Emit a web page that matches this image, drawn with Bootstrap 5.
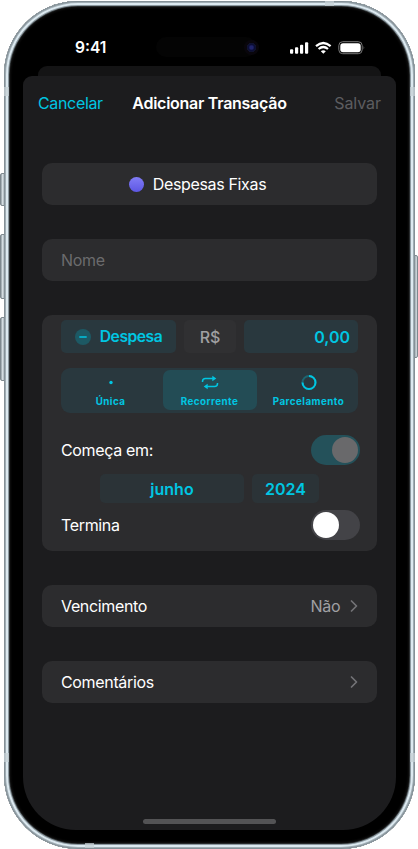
<!DOCTYPE html>
<html lang="pt-BR" data-bs-theme="dark">
<head>
<meta charset="utf-8">
<meta name="viewport" content="width=device-width, initial-scale=1">
<title>Adicionar Transação</title>
<link href="https://cdn.jsdelivr.net/npm/bootstrap@5.3.0/dist/css/bootstrap.min.css" rel="stylesheet">
<style>
html,body{height:849px;overflow:hidden}
body{background:#fff;font-family:Inter,"Liberation Sans",sans-serif;font-size:16px;line-height:20px;color:#fff;width:418px;padding:1px 3px 0 4px}
.phone{width:411px;height:847.5px;border-radius:74px;background:#000;padding:0 19px;
 box-shadow:inset 0 0 0 1px #849097,inset 0 0 0 2px #a0adb4,inset 0 0 0 4px #dce9f0,inset 0 0 0 5px #8b989f,inset 0 0 0 5.8px #303436,inset 0 0 2px 7px #101010}
.key{background:linear-gradient(90deg,#8e9aa1,#e2eaee 60%,#9ba8af);border:1px solid #7d888e;width:5px;border-radius:2px 0 0 2px;left:0;z-index:-1}
.key-r{left:auto;right:0;border-radius:0 2px 2px 0;width:4px}
.band{background:#c5d0d5;opacity:.75}
.status{height:65px;padding:36px 8px 0 52px}
.clock{font-size:15.6px;line-height:21px;font-weight:600;letter-spacing:0}
.island{left:156px;top:36.5px;width:100px;height:20px;border-radius:10px;background:#040404}
.lens{left:244px;top:40px;width:15px;height:15px;border-radius:50%;background:radial-gradient(circle,#20246b 0 1.5px,#0b0d36 3px,#10132c 4.5px,#09060c 5px)}
.behind{height:10px;margin:0 15px;background:#141415;border-radius:9px 9px 0 0}
.sheet{height:754px;background:#1c1c1e;border-radius:9px 9px 53px 53px;padding:0 19px}
.head{height:54px;margin:0 -4px}
.head>:first-child,.head>:last-child{flex:1 1 0}
.tint{color:#00c6e2}
.ttl{font-weight:600;letter-spacing:-.27px}
.panel{background:#2c2c2e;border-radius:10px;height:42px;padding:0 19px}
.entry{background:transparent;border:0;padding:0;color:#fff;outline:0}
.entry::placeholder{color:#6b6b6d;opacity:1}
.group{height:235.5px;padding-top:5px}
.dot{width:15px;height:15px;border-radius:50%;background:linear-gradient(#817cf6,#5d57e3)}
.tile{background:#29383e;border-radius:5px;height:33px;font-weight:600}
.seg{background:#29383e;border-radius:9px;height:45px;margin-top:14.5px;padding:2.5px 0}
.seg>div{width:99px;font-size:9.8px;line-height:11px;font-weight:700;letter-spacing:.45px;border-radius:7px;padding-top:4.5px}
.seg svg{height:21px}
.seg>.on{background:#234c55;width:94px;margin:0 2.5px}
.pill{height:29px;border-radius:5px;background:#2b3337;font-weight:600}
.tg{width:49px;height:30px;border-radius:15px;padding:2px;margin-right:-2px}
.tg span{width:26px;height:26px;border-radius:50%}
.bar{width:133px;height:5px;border-radius:3px;background:#535355}
.txt{letter-spacing:-.34px}
</style>
<script src="https://cdn.jsdelivr.net/npm/bootstrap@5.3.0/dist/js/bootstrap.bundle.min.js"></script>
</head>
<body class="position-relative">
<div class="key position-absolute" style="top:173px;height:33px"></div>
<div class="key position-absolute" style="top:234px;height:65px"></div>
<div class="key position-absolute" style="top:317px;height:64px"></div>
<div class="key key-r position-absolute" style="top:255px;height:103px"></div>
<main class="phone">
 <div class="island position-absolute"></div><div class="lens position-absolute"></div>
 <div class="band position-absolute" style="left:4px;top:87px;width:5px;height:9px"></div>
 <div class="band position-absolute" style="left:410px;top:87px;width:5px;height:9px"></div>
 <div class="band position-absolute" style="left:4px;top:753px;width:5px;height:9px"></div>
 <div class="band position-absolute" style="left:410px;top:753px;width:5px;height:9px"></div>
 <div class="band position-absolute" style="left:85px;top:843px;width:9px;height:5px"></div>
 <div class="band position-absolute" style="left:325px;top:1px;width:9px;height:5px"></div>
 <div class="status d-flex justify-content-between align-items-start">
  <span class="clock">9:41</span>
  <svg width="76" height="14" viewBox="290 40 76 14" class="mt-1 flex-shrink-0" style="margin-right:23px">
   <g fill="#fff"><rect x="291" y="48.3" width="3.2" height="4.5" rx="1"/><rect x="296" y="46.3" width="3.2" height="6.5" rx="1"/><rect x="301" y="43.8" width="3.2" height="9" rx="1"/><rect x="306" y="41.2" width="3.2" height="11.6" rx="1"/></g>
   <g fill="none" stroke="#fff" stroke-width="2.2"><path d="M317 45.2Q324.300 38.800 331.600 45.200"/><path d="M319.600 48Q324.300 44 329 48"/></g><path d="M321.800 50.200Q324.300 48.100 326.800 50.200L324.300 52.800Z" fill="#fff"/>
   <rect x="339.800" y="40.700" width="23.400" height="12" rx="3.900" fill="none" stroke="#777"/><rect x="341.300" y="42.200" width="20.400" height="9" rx="2.700" fill="#fff"/><path d="M364.600 44.800Q366 46.700 364.600 48.600Z" fill="#777"/>
  </svg>
 </div>
 <div class="behind"></div>
 <section class="sheet d-flex flex-column">
  <header class="head d-flex align-items-center"><span class="tint txt">Cancelar</span><span class="ttl">Adicionar Transação</span><span class="txt text-end" style="color:#5d5d60;letter-spacing:-.05px">Salvar</span></header>
  <div class="panel d-flex align-items-center justify-content-center txt" style="margin-top:33px;gap:9px;padding-right:43px"><span class="dot"></span><span>Despesas Fixas</span></div>
  <div class="panel d-flex align-items-center" style="margin-top:34px"><input class="entry w-100 txt" placeholder="Nome" aria-label="Nome"></div>
  <div class="panel group" style="margin-top:34px">
   <div class="d-flex" style="gap:8px">
    <div class="tile tint d-flex align-items-center justify-content-center" style="width:115px;gap:9px"><svg width="16" height="16"><circle cx="8" cy="8" r="8" fill="#1d5964"/><path d="M4.300 8h7.400" stroke="#00c6e2" stroke-width="1.500"/></svg><span style="font-size:15.700px;letter-spacing:-.5px">Despesa</span></div>
    <div class="tile d-flex align-items-center justify-content-center" style="width:52px;background:#303032;color:#a0a0a2;font-weight:500">R$</div>
    <div class="tile tint d-flex align-items-center justify-content-end flex-fill pe-2">0,00</div>
   </div>
   <div class="seg d-flex tint text-center">
    <div><svg width="20" height="21" class="d-block mx-auto"><circle cx="10" cy="7.500" r="1.700" fill="#00c6e2"/></svg>Única</div>
    <div class="on"><svg width="20" height="21" viewBox="0 0 20 21" class="d-block mx-auto" fill="none" stroke="#00c6e2" stroke-width="1.500"><path d="M2.500 7V6.500Q2.500 3.500 5.500 3.500H13M17.500 8V8.500Q17.500 11.500 14.500 11.500H7"/><path d="M12.300 .8V6.200L16.300 3.500ZM7.700 8.800V14.200L3.700 11.500Z" fill="#00c6e2" stroke="none"/></svg>Recorrente</div>
    <div><svg width="20" height="21" class="d-block mx-auto" fill="none" stroke-width="2"><circle cx="10" cy="7.500" r="6.500" stroke="#1d6571"/><path d="M10 1A6.500 6.500 0 1 1 3.500 7.500" stroke="#00c6e2"/></svg>Parcelamento</div>
   </div>
   <div class="d-flex justify-content-between align-items-center txt" style="margin-top:22px;height:30px"><span>Começa em:</span><div class="tg d-flex justify-content-end" style="background:#24515a"><span style="background:#69696b"></span></div></div>
   <div class="d-flex justify-content-center tint" style="gap:8px;margin-top:9.500px"><div class="pill d-flex align-items-center justify-content-center" style="width:144px">junho</div><div class="pill d-flex align-items-center justify-content-center" style="width:67px">2024</div></div>
   <div class="d-flex justify-content-between align-items-center txt" style="margin-top:6.500px;height:30px"><span>Termina</span><div class="tg d-flex" style="background:#434347"><span class="bg-white"></span></div></div>
  </div>
  <div class="panel d-flex align-items-center txt" style="margin-top:34px"><span class="me-auto">Vencimento</span><span style="color:#a0a0a3;letter-spacing:-.2px">Não</span><svg width="9" height="14" style="margin-left:8.500px" fill="none" stroke="#737376" stroke-width="1.700" stroke-linecap="round" stroke-linejoin="round"><path d="M2.500 2L7.500 7L2.500 12"/></svg></div>
  <div class="panel d-flex align-items-center txt" style="margin-top:34px"><span class="me-auto">Comentários</span><svg width="9" height="14" fill="none" stroke="#737376" stroke-width="1.700" stroke-linecap="round" stroke-linejoin="round"><path d="M2.500 2L7.500 7L2.500 12"/></svg></div>
  <div class="bar mt-auto mx-auto" style="margin-bottom:6px"></div>
 </section>
</main>
</body>
</html>
